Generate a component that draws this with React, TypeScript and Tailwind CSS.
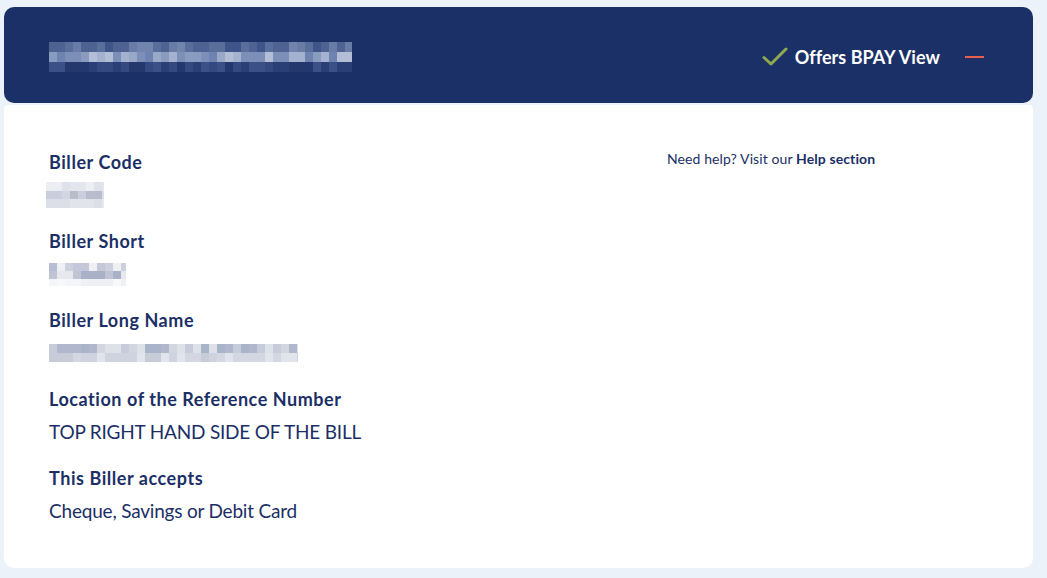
import React from "react";

const font = { fontFamily: "Lato, 'Noto Sans', sans-serif" };

// deterministic pseudo-random for the redacted mosaics
function rng(seed: number) {
  let s = seed;
  return () => {
    s = (s * 9301 + 49297) % 233280;
    return s / 233280;
  };
}

function Mosaic({
  width,
  cell,
  rows,
  seed,
}: {
  width: number;
  cell: number;
  rows: { h: number; colors: string[] }[];
  seed: number;
}) {
  const r = rng(seed);
  const cols = Math.ceil(width / cell);
  const height = rows.reduce((a, b) => a + b.h, 0);
  let y = 0;
  const rects: React.ReactNode[] = [];
  rows.forEach((row, ri) => {
    for (let c = 0; c < cols; c++) {
      const color = row.colors[Math.floor(r() * row.colors.length)];
      rects.push(<rect key={`${ri}-${c}`} x={c * cell} y={y} width={cell} height={row.h} fill={color} />);
    }
    y += row.h;
  });
  return (
    <svg width={width} height={height} viewBox={`0 0 ${width} ${height}`} className="block">
      {rects}
    </svg>
  );
}

function Field({ label, children }: { label: string; children: React.ReactNode }) {
  return (
    <div>
      <p className="text-[18px] font-bold leading-6 tracking-[0.55px] text-[#1b2f66]">{label}</p>
      <div className="mt-[6px] flex h-[30px] items-center text-[19px] leading-[30px] tracking-[-0.2px] text-[#1b2f66]">
        {children}
      </div>
    </div>
  );
}

export default function App() {
  return (
    <div className="min-h-[578px] bg-[#ebf2fa] px-[4px] pt-[7px]" style={font}>
      <div className="w-[1029px]">
        <header className="flex h-[96px] items-center justify-between rounded-[10px] bg-[#1a3067] pl-[45px] pr-[49px] pt-[4px]">
          <Mosaic
            width={303}
            cell={8}
            seed={7}
            rows={[
              { h: 10, colors: ["#5a6e9c", "#6a7ca6", "#4f6392", "#7284ac", "#3f558a"] },
              { h: 10, colors: ["#8a9bc0", "#a5b2cf", "#7c8fb8", "#9aa8c8", "#6f83b0", "#b3bdd6"] },
              { h: 10, colors: ["#2a3f76", "#334980", "#24386e", "#3a5086"] },
            ]}
          />
          <div className="flex items-center">
            <svg width="26" height="20" viewBox="0 0 26 20" className="mr-[7px]">
              <path d="M2 10.5 L9 17 L24 2" fill="none" stroke="#8fa94f" strokeWidth="3" strokeLinecap="round" strokeLinejoin="round" />
            </svg>
            <span className="text-[18px] font-bold tracking-[0.05px] text-white">Offers BPAY View</span>
            <span className="ml-[25px] block h-[2px] w-[19px] bg-[#e8604c]" />
          </div>
        </header>

        <section className="mt-[2px] grid h-[463px] grid-cols-[618px_1fr] rounded-b-[10px] rounded-t-[4px] bg-white pl-[45px] pt-[45px]">
          <div className="flex flex-col gap-[19px]">
            <Field label="Biller Code">
              <div className="-ml-[3px]">
                <Mosaic
                  width={58}
                  cell={8}
                  seed={3}
                  rows={[
                    { h: 9, colors: ["#eceef3", "#e4e6ee", "#dfe2ea"] },
                    { h: 8, colors: ["#dcdfe8", "#c9cedc", "#b9bccd", "#d2d6e2"] },
                    { h: 9, colors: ["#e2e4ec", "#e8e9ef", "#dcdfe8"] },
                  ]}
                />
              </div>
            </Field>
            <Field label="Biller Short">
              <Mosaic
                width={77}
                cell={8}
                seed={11}
                rows={[
                  { h: 8, colors: ["#c4c8d8", "#cdd1de", "#b7bcd0", "#eef0f4"] },
                  { h: 8, colors: ["#cdd0dc", "#a9b0c8", "#c0c4d4", "#e6e8ee"] },
                  { h: 7, colors: ["#f4f5f8", "#eef0f4", "#f7f8fa"] },
                ]}
              />
            </Field>
            <Field label="Biller Long Name">
              <Mosaic
                width={249}
                cell={8}
                seed={21}
                rows={[
                  { h: 9, colors: ["#c7ccda", "#b1b7cc", "#d3d6e1", "#a9b4c8", "#dfe1e9"] },
                  { h: 9, colors: ["#d4d7e2", "#c8ccd9", "#e2e4eb", "#cfd3df"] },
                ]}
              />
            </Field>
            <Field label="Location of the Reference Number">TOP RIGHT HAND SIDE OF THE BILL</Field>
            <Field label="This Biller accepts">Cheque, Savings or Debit Card</Field>
          </div>
          <div>
            <p className="text-[14px] leading-[18px] tracking-[0.1px] text-[#1b2f66]">
              Need help? Visit our <span className="font-bold">Help section</span>
            </p>
          </div>
        </section>
      </div>
    </div>
  );
}
